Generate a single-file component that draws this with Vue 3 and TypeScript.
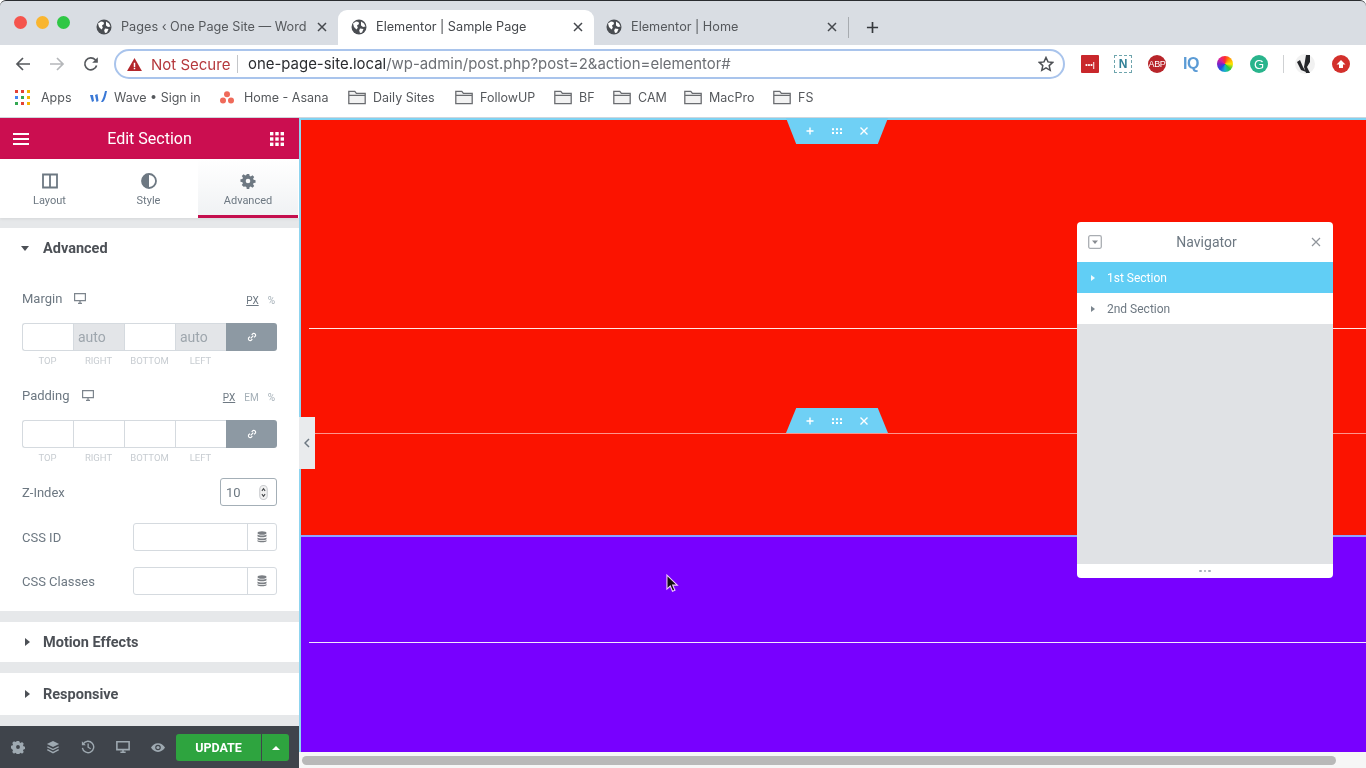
<script setup lang="ts">
const tabs = [
  { title: 'Pages ‹ One Page Site — Word', active: false },
  { title: 'Elementor | Sample Page', active: true },
  { title: 'Elementor | Home', active: false },
]
const bookmarks = [
  { label: 'Daily Sites', w: 107 },
  { label: 'FollowUP', w: 99 },
  { label: 'BF', w: 59 },
  { label: 'CAM', w: 71 },
  { label: 'MacPro', w: 89 },
  { label: 'FS', w: 60 },
]
const sides = ['TOP', 'RIGHT', 'BOTTOM', 'LEFT']
const marginCells = ['', 'auto', '', 'auto']
const paddingCells = ['', '', '', '']
const linkPath = 'M6.5 9.5l3-3M5.6 7.6L4 9.2a2.2 2.2 0 0 0 2.8 2.8l1.6-1.6M7.6 5.6L9.2 4A2.2 2.2 0 0 1 12 6.8l-1.6 1.6'
</script>

<template>
  <div class="screen">
    <header class="tabstrip">
      <div class="lights"><i class="l red"></i><i class="l amber"></i><i class="l green"></i></div>
      <div v-for="t in tabs" :key="t.title" class="tab" :class="{ active: t.active }">
        <svg class="globe" viewBox="0 0 16 16"><circle cx="8" cy="8" r="7.5" fill="#4a4d52"/><path d="M2 4.5l3-2 2.5.5.5 2-2 1.5.8 2.2-1.3 1.8L3 8zM10 2.5l3 2 1.5 3-2.5.5-2-1.5zM9 9.5l3.5 0.5-1.5 3.5-2 .5-.8-2.5z" fill="#fff"/></svg>
        <span class="tab-title">{{ t.title }}</span>
        <svg class="tab-x" viewBox="0 0 10 10"><path d="M1 1l8 8M9 1l-8 8" stroke="#45484d" stroke-width="1.5"/></svg>
      </div>
      <i class="tab-sep"></i>
      <svg class="plus" viewBox="0 0 14 14"><path d="M7 1v12M1 7h12" stroke="#35383c" stroke-width="1.8"/></svg>
    </header>

    <div class="toolbar">
      <svg class="nav" viewBox="0 0 16 16"><path d="M15 8H2M8 2L2 8l6 6" fill="none" stroke="#55585c" stroke-width="1.7"/></svg>
      <svg class="nav" viewBox="0 0 16 16"><path d="M1 8h13M8 2l6 6-6 6" fill="none" stroke="#b5b7ba" stroke-width="1.7"/></svg>
      <svg class="nav" viewBox="0 0 16 16"><path d="M13.6 9.5A6 6 0 1 1 12.3 3.8L14 5.5" fill="none" stroke="#55585c" stroke-width="1.7"/><path d="M14.8 1.2v5.6H9.2z" fill="#55585c"/></svg>
      <div class="omnibox">
        <svg class="warn" viewBox="0 0 16 14"><path d="M8 0l8 14H0z" fill="#b3262b"/><path d="M7.2 5h1.6v4.6H7.200zM7.200 10.600h1.600v1.500H7.200z" fill="#fff"/></svg>
        <span class="insecure">Not Secure</span>
        <i class="omni-sep"></i>
        <span class="url"><b>one-page-site.local</b>/wp-admin/post.php?post=2&amp;action=elementor#</span>
        <svg class="star" viewBox="0 0 16 16"><path d="M8 1.500l2 4.400 4.700.5-3.500 3.200 1 4.700L8 11.900l-4.200 2.400 1-4.700L1.300 6.400 6 5.900z" fill="none" stroke="#4d5054" stroke-width="1.500"/></svg>
      </div>
      <div class="exts">
        <div class="ext e-lp"><span>•••|</span></div>
        <div class="ext e-n">N</div>
        <div class="ext e-abp">ABP</div>
        <div class="ext e-iq">IQ</div>
        <div class="ext e-wheel"></div>
        <div class="ext e-g">G</div>
        <i class="ext-sep"></i>
        <svg class="ext-avatar" viewBox="0 0 20 20"><circle cx="10" cy="10" r="10" fill="#f1f1f1"/><path d="M11 1h4v7l-3 5 3 6h-4l-2-6zM2 8l3-2 3 7 3 5-5-2z" fill="#24262a"/></svg>
        <div class="ext e-up"><svg viewBox="0 0 12 12"><path d="M6 2l4.500 4.500H8V10H4V6.500H1.500z" fill="#fff"/></svg></div>
      </div>
    </div>

    <nav class="bookmarks">
      <div class="bm bm-apps">
        <svg class="apps-ico" viewBox="0 0 15 15">
          <g v-for="(c, r) in [['#e34234','#e34234','#f4b400'],['#4285f4','#34a853','#f4b400'],['#34a853','#e34234','#f4b400']]" :key="r">
            <rect v-for="(f, x) in c" :key="x" :x="x * 6" :y="r * 6" width="3" height="3" :fill="f"/>
          </g>
        </svg>
        <span>Apps</span>
      </div>
      <div class="bm bm-wave">
        <svg class="wave-ico" viewBox="0 0 18 14"><path d="M1 5l2 7 2-1-1-6zM6 5l1.500 7 2-1-1-7zM12 12c2-3 3-7 4-11h2c-1 5-2 9-4 11z" fill="#3a78d6"/></svg>
        <span>Wave • Sign in</span>
      </div>
      <div class="bm bm-asana">
        <svg class="asana-ico" viewBox="0 0 14 13"><circle cx="7" cy="3.200" r="3" fill="#ef6a5a"/><circle cx="3" cy="9.500" r="3" fill="#ef6a5a"/><circle cx="11" cy="9.500" r="3" fill="#ef6a5a"/></svg>
        <span>Home - Asana</span>
      </div>
      <div v-for="b in bookmarks" :key="b.label" class="bm bm-folder" :style="{ width: b.w + 'px' }">
        <svg class="folder" viewBox="0 0 18 15"><path d="M.8 13.600V1.400h6l1.600 2h8.800v10.200zM.8 5.400h16.400" fill="#f2f2f2" stroke="#6a6c70" stroke-width="1.300"/></svg>
        <span>{{ b.label }}</span>
      </div>
    </nav>

    <main class="editor">
      <aside class="panel">
        <div class="panel-head">
          <svg class="head-ico" viewBox="0 0 18 14"><path d="M1 2h16M1 7h16M1 12h16" stroke="#fff" stroke-width="2"/></svg>
          <span>Edit Section</span>
          <svg class="head-ico grid-ico" viewBox="0 0 14 14"><g fill="#fff"><rect x="0" y="0" width="3.400" height="3.400"/><rect x="5.300" y="0" width="3.400" height="3.400"/><rect x="10.600" y="0" width="3.400" height="3.400"/><rect x="0" y="5.300" width="3.400" height="3.400"/><rect x="5.300" y="5.300" width="3.400" height="3.400"/><rect x="10.600" y="5.300" width="3.400" height="3.400"/><rect x="0" y="10.600" width="3.400" height="3.400"/><rect x="5.300" y="10.600" width="3.400" height="3.400"/><rect x="10.600" y="10.600" width="3.400" height="3.400"/></g></svg>
        </div>
        <div class="panel-tabs">
          <div class="ptab">
            <svg viewBox="0 0 16 16"><path d="M1 1.500h14v13H1zM8 1.500v13" fill="none" stroke="#6d7882" stroke-width="1.800"/></svg>
            <span>Layout</span>
          </div>
          <div class="ptab">
            <svg viewBox="0 0 16 16"><circle cx="8" cy="8" r="7" fill="none" stroke="#6d7882" stroke-width="1.800"/><path d="M8 1a7 7 0 0 0 0 14z" fill="#6d7882"/></svg>
            <span>Style</span>
          </div>
          <div class="ptab on">
            <svg viewBox="-1 -1 18 18"><path fill="#6d7882" fill-rule="evenodd" d="M6.600 0h2.800l.4 2.200 1.300.6L13 1.500l2 2-1.300 1.900.6 1.300 2.200.4v2.800l-2.200.4-.6 1.300 1.300 1.900-2 2-1.900-1.300-1.300.6-.4 2.200H6.600l-.4-2.200-1.300-.6L3 14.500l-2-2 1.300-1.900-.6-1.300L-.5 8.900V6.100l2.200-.4.6-1.300L1 2.500l2-2 1.900 1.300 1.300-.6zM8 5.400a2.600 2.600 0 1 0 0 5.200 2.600 2.600 0 0 0 0-5.200z"/></svg>
            <span>Advanced</span>
          </div>
        </div>

        <section class="group first">
          <div class="group-head"><i class="caret-down"></i><strong>Advanced</strong></div>

          <div class="label-row">
            <span class="lbl">Margin</span>
            <svg class="mon" viewBox="0 0 12 11"><path d="M.6.600h10.800v7H.6z" fill="none" stroke="#7d858d" stroke-width="1.200"/><path d="M4 10.400h4M6 8v2" stroke="#7d858d" stroke-width="1.300"/></svg>
            <span class="units"><u>PX</u><em>%</em></span>
          </div>
          <div class="dims">
            <div v-for="(c, i) in marginCells" :key="i" class="cell" :class="{ fill: c }">{{ c }}</div>
            <div class="link"><svg viewBox="0 0 16 16"><path :d="linkPath" fill="none" stroke="#fff" stroke-width="1.300"/></svg></div>
          </div>
          <div class="sides"><span v-for="s in sides" :key="s">{{ s }}</span><i></i></div>

          <div class="label-row second">
            <span class="lbl">Padding</span>
            <svg class="mon" viewBox="0 0 12 11"><path d="M.6.600h10.800v7H.6z" fill="none" stroke="#7d858d" stroke-width="1.200"/><path d="M4 10.400h4M6 8v2" stroke="#7d858d" stroke-width="1.300"/></svg>
            <span class="units"><u>PX</u><em>EM</em><em>%</em></span>
          </div>
          <div class="dims">
            <div v-for="(c, i) in paddingCells" :key="i" class="cell"></div>
            <div class="link"><svg viewBox="0 0 16 16"><path :d="linkPath" fill="none" stroke="#fff" stroke-width="1.300"/></svg></div>
          </div>
          <div class="sides"><span v-for="s in sides" :key="s">{{ s }}</span><i></i></div>

          <div class="field z">
            <span class="lbl">Z-Index</span>
            <div class="num"><span>10</span>
              <svg viewBox="0 0 8 14"><rect x=".5" y=".5" width="7" height="13" rx="3.500" fill="#f2f2f2" stroke="#c9cbce"/><path d="M2.500 5.500L4 3.500l1.500 2M2.500 8.500L4 10.500l1.500-2" fill="none" stroke="#44474b"/></svg>
            </div>
          </div>
          <div class="field idf">
            <span class="lbl">CSS ID</span>
            <div class="dyn"><div class="dyn-in"></div><div class="dyn-btn"><svg viewBox="0 0 10 12"><ellipse cx="5" cy="2" rx="4.500" ry="1.800" fill="#7b7f84"/><path d="M.5 3.400c1 1.300 8 1.300 9 0v1.900c-1 1.300-8 1.300-9 0zM.5 6.400c1 1.300 8 1.300 9 0v1.900c-1 1.300-8 1.300-9 0zM.5 9c1 1.300 8 1.300 9 0v1.200c-1 1.500-8 1.500-9 0z" fill="#7b7f84"/></svg></div></div>
          </div>
          <div class="field cls">
            <span class="lbl">CSS Classes</span>
            <div class="dyn"><div class="dyn-in"></div><div class="dyn-btn"><svg viewBox="0 0 10 12"><ellipse cx="5" cy="2" rx="4.500" ry="1.800" fill="#7b7f84"/><path d="M.5 3.400c1 1.300 8 1.300 9 0v1.900c-1 1.300-8 1.300-9 0zM.5 6.400c1 1.300 8 1.300 9 0v1.900c-1 1.300-8 1.300-9 0zM.5 9c1 1.300 8 1.300 9 0v1.200c-1 1.500-8 1.500-9 0z" fill="#7b7f84"/></svg></div></div>
          </div>
        </section>

        <section class="group closed motion"><i class="caret-right"></i><strong>Motion Effects</strong></section>
        <section class="group closed resp"><i class="caret-right"></i><strong>Responsive</strong></section>

        <footer class="panel-foot">
          <svg class="fi" viewBox="0 0 16 16"><path fill="#a4afb7" fill-rule="evenodd" d="M6.600 1h2.800l.4 1.700 1.300.6L12.600 2.400l2 2-.9 1.500.6 1.300 1.700.4v2.800l-1.700.4-.6 1.300.9 1.500-2 2-1.500-.9-1.300.6-.4 1.700H6.600l-.4-1.700-1.300-.6-1.500.9-2-2 .9-1.500-.6-1.300L0 9.400V6.600l1.700-.4.6-1.300-.9-1.500 2-2 1.500.9 1.300-.6zM8 5.800a2.200 2.200 0 1 0 0 4.400 2.200 2.200 0 0 0 0-4.400z"/></svg>
          <svg class="fi" viewBox="0 0 16 16"><path d="M8 1l7 3.500L8 8 1 4.500z" fill="#a4afb7"/><path d="M1.500 7.700L8 11l6.500-3.300M1.500 11L8 14.500 14.500 11" fill="none" stroke="#a4afb7" stroke-width="1.500"/></svg>
          <svg class="fi" viewBox="0 0 16 16"><path d="M2.500 4.500A6.500 6.500 0 1 1 1.600 9" fill="none" stroke="#a4afb7" stroke-width="1.600"/><path d="M1 1.500v4.500h4.500zM7.400 4h1.500v4l2.500 1.500-.7 1.200-3.300-2z" fill="#a4afb7"/></svg>
          <svg class="fi" viewBox="0 0 16 14"><path d="M1 1h14v9H1z" fill="none" stroke="#a4afb7" stroke-width="1.800"/><path d="M5 13h6M8 10v3" stroke="#a4afb7" stroke-width="1.800"/></svg>
          <svg class="fi eye" viewBox="0 0 16 10"><path fill="#a4afb7" fill-rule="evenodd" d="M8 0c3.500 0 6.500 2.200 8 5-1.500 2.800-4.500 5-8 5S1.500 7.800 0 5c1.500-2.800 4.500-5 8-5zm0 1.800a3.200 3.200 0 1 0 0 6.400 3.200 3.200 0 0 0 0-6.400z"/><circle cx="8" cy="5" r="1.800" fill="#a4afb7"/></svg>
          <div class="publish">
            <span class="update">UPDATE</span>
            <span class="pub-more"><i></i></span>
          </div>
        </footer>
      </aside>

      <div class="canvas">
        <div class="page">
          <div class="sec red">
            <div class="col col-a"></div>
            <div class="col col-b"></div>
            <div class="handle top"><svg viewBox="0 0 66 12"><path d="M6 2.500v7M2.500 6h7M56.500 2.500l7 7M63.500 2.500l-7 7" stroke="#fff" stroke-width="1.400"/><g fill="#fff"><rect x="28" y="3.200" width="2" height="2"/><rect x="32" y="3.200" width="2" height="2"/><rect x="36" y="3.200" width="2" height="2"/><rect x="28" y="7" width="2" height="2"/><rect x="32" y="7" width="2" height="2"/><rect x="36" y="7" width="2" height="2"/></g></svg></div>
            <div class="handle mid"><svg viewBox="0 0 66 12"><path d="M6 2.500v7M2.500 6h7M56.500 2.500l7 7M63.500 2.500l-7 7" stroke="#fff" stroke-width="1.400"/><g fill="#fff"><rect x="28" y="3.200" width="2" height="2"/><rect x="32" y="3.200" width="2" height="2"/><rect x="36" y="3.200" width="2" height="2"/><rect x="28" y="7" width="2" height="2"/><rect x="32" y="7" width="2" height="2"/><rect x="36" y="7" width="2" height="2"/></g></svg></div>
          </div>
          <div class="sec purple">
            <div class="col col-c"></div>
          </div>
          <svg class="cursor" viewBox="0 0 14 20"><path d="M1 1v15l3.600-3.300 2.400 5.600 2.600-1.100-2.400-5.400h5z" fill="#111" stroke="#f2c7ff" stroke-width="1.200"/></svg>
        </div>
        <div class="hscroll"><div class="thumb"></div></div>

        <div class="collapse"><svg viewBox="0 0 6 10"><path d="M5 1L1 5l4 4" fill="none" stroke="#6d7882" stroke-width="1.500"/></svg></div>

        <div class="navigator">
          <div class="nav-head">
            <svg class="nav-min" viewBox="0 0 14 14"><rect x=".7" y=".7" width="12.600" height="12.600" rx="1.500" fill="none" stroke="#a9adb2" stroke-width="1.300"/><path d="M4 5.500h6L7 9z" fill="#888c91"/></svg>
            <span>Navigator</span>
            <svg class="nav-x" viewBox="0 0 10 10"><path d="M1 1l8 8M9 1l-8 8" stroke="#90959b" stroke-width="1.200"/></svg>
          </div>
          <div class="nav-row sel"><i class="n-caret"></i>1st Section</div>
          <div class="nav-row"><i class="n-caret"></i>2nd Section</div>
          <div class="nav-body"></div>
          <div class="nav-foot"><i></i><i></i><i></i></div>
        </div>
      </div>
    </main>
  </div>
</template>

<style>
html, body { margin: 0; background: #1d1f22; overflow: hidden; }
</style>

<style scoped>
.screen {
  width: 1366px; height: 768px; display: flex; flex-direction: column; overflow: hidden;
  background: #fff; font-family: Roboto, "Liberation Sans", sans-serif; color: #55595c;
  filter: blur(0.45px);
}
.tabstrip {
  height: 45px; box-sizing: border-box; flex: none; display: flex; align-items: flex-end;
  background: #d9dde3; border-top: 1px solid #2a2c30; border-radius: 6px 6px 0 0;
  position: relative;
}
.lights { width: 83px; height: 44px; box-sizing: border-box; padding: 15px 0 0 14px; display: flex; gap: 8.500px; }
.l { width: 13px; height: 13px; border-radius: 50%; display: block; }
.red { background: #f5544d; }
.amber { background: #f9b52f; }
.green { background: #2fc745; }
.tab {
  width: 255px; height: 35px; box-sizing: border-box; display: flex; align-items: center;
  padding: 0 11px 2px 11px; color: #55585c; position: relative; flex: none;
  font-family: Inter, Roboto, sans-serif; font-size: 12.700px;
}
.tab.active { background: #fff; border-radius: 9px 9px 0 0; color: #45484c; width: 256px; margin-right: -1px; }
.tab:first-of-type { margin-right: -2px; }
.tab:first-of-type .tab-title { -webkit-mask-image: linear-gradient(90deg, #000 92%, transparent 100%); mask-image: linear-gradient(90deg, #000 92%, transparent 100%); }
.globe { width: 16px; height: 16px; flex: none; margin-left: 2px; margin-right: 9px; }
.tab-title { flex: 1; min-width: 0; white-space: nowrap; overflow: hidden; }
.tab-x { width: 10px; height: 10px; flex: none; margin-left: 10px; }
.tab-sep { width: 1px; height: 21px; background: #a7abb0; margin: 0 0 7px 0; flex: none; }
.plus { width: 13px; height: 13px; margin: 0 0 11px 17px; flex: none; }

.toolbar { height: 35px; flex: none; display: flex; align-items: center; padding: 3px 0 0 15px; box-sizing: border-box; }
.nav { width: 16px; height: 16px; margin-right: 18px; flex: none; }
.omnibox {
  width: 951px; height: 30px; margin-left: -3px; flex: none; box-sizing: border-box;
  border: 2px solid #a9c4ec; border-radius: 15px; display: flex; align-items: center; padding: 0 8px 0 11px;
  font-family: Inter, Roboto, sans-serif;
}
.warn { width: 15px; height: 13px; flex: none; }
.insecure { font-size: 15px; color: #b5383c; margin-left: 9px; width: 80px; white-space: nowrap; }
.omni-sep { width: 1px; height: 18px; background: #c4c6c9; margin: 0 10px 0 6px; }
.url { font-size: 14.930px; color: #6d7075; flex: 1; white-space: nowrap; }
.url b { font-weight: 400; color: #2b2d30; }
.star { width: 16px; height: 16px; margin-right: 1px; }
.exts { display: flex; align-items: center; margin-left: 16px; }
.ext { width: 18px; height: 18px; flex: none; margin-right: 16px; box-sizing: border-box; display: flex; align-items: center; justify-content: center; color: #fff; font-family: "Liberation Sans", sans-serif; font-weight: 700; }
.e-lp { background: #c9272b; border-radius: 1px; font-size: 7px; margin-right: 15px; }
.e-n { border: 1.500px dashed #6fa5ad; color: #2f7f96; font-size: 12px; }
.e-abp { background: #b8252a; border-radius: 50%; font-size: 9px; font-weight: 400; letter-spacing: -0.3px; }
.e-iq { color: #5b9bd5; font-size: 16px; letter-spacing: -0.500px; }
.e-wheel { background: conic-gradient(#ff2d2d, #ff9b00, #ffe600, #2ac940, #18b6c9, #2050e0, #7b22c9, #e02090, #ff2d2d); border-radius: 50%; width: 16px; height: 16px; margin-right: 17px; margin-left: 1px; }
.e-g { background: #29b48c; border-radius: 50%; font-size: 13px; font-weight: 400; margin-right: 15px; }
.ext-sep { width: 1px; height: 18px; background: #cfd1d3; margin-right: 11px; }
.ext-avatar { width: 20px; height: 20px; margin-right: 17px; }
.e-up { background: #d3302c; border-radius: 50%; }
.e-up svg { width: 12px; height: 12px; }

.bookmarks { height: 37px; flex: none; display: flex; align-items: center; padding: 0 0 3px 15px; box-sizing: border-box; font-size: 12.500px; font-family: Inter, Roboto, sans-serif; color: #55585c; }
.bm { display: flex; align-items: center; white-space: nowrap; flex: none; }
.bm-apps { width: 73px; gap: 11px; }
.apps-ico { width: 15px; height: 15px; }
.bm-wave { width: 130px; gap: 7px; }
.wave-ico { width: 18px; height: 14px; margin-left: 1px; }
.bm-asana { width: 128px; gap: 10px; margin-left: 2px; }
.asana-ico { width: 14px; height: 13px; }
.bm-folder { gap: 7px; }
.folder { width: 18px; height: 15px; flex: none; }

.editor { flex: 1; min-height: 0; display: flex; border-top: 1px solid #cfd6dc; }
.panel { width: 299px; flex: none; display: flex; flex-direction: column; background: #e6e8ea; box-sizing: border-box; height: 650px; }
.panel-head { height: 41px; flex: none; background: #cb0e50; color: #fff; display: flex; align-items: center; justify-content: space-between; padding: 0 15px 0 12px; font-size: 16px; font-weight: 400; }
.panel-head span { margin-right: 1px; }
.head-ico { width: 18px; height: 14px; }
.grid-ico { width: 14px; height: 14px; }
.panel-tabs { height: 59px; flex: none; display: flex; background: #fff; box-shadow: 0 1px 3px rgba(0,0,0,.08); }
.ptab { width: 99px; flex: none; display: flex; flex-direction: column; align-items: center; box-sizing: border-box; padding-top: 14px; font-size: 11px; color: #6d7882; gap: 5px; }
.ptab svg { width: 16px; height: 16px; }
.ptab.on { background: linear-gradient(#fff, #f0f2f4); border-bottom: 3px solid #c40f4e; width: 100px; }
.group { background: #fff; }
.group strong { font-size: 14.500px; font-weight: 700; color: #4c5056; }
.first { margin-top: 10px; height: 383px; flex: none; display: flex; flex-direction: column; padding: 0 22px 0 22px; box-sizing: border-box; }
.group-head { height: 40px; flex: none; display: flex; align-items: center; }
.caret-down { width: 0; height: 0; border: 4.500px solid transparent; border-top: 5px solid #4c5056; border-bottom: 0; margin-right: 14px; margin-left: -1px; }
.caret-right { width: 0; height: 0; border: 4px solid transparent; border-left: 5px solid #4c5056; border-right: 0; margin-right: 10px; }
.label-row { display: flex; align-items: center; height: 20px; margin-top: 20px; flex: none; }
.label-row.second { margin-top: 18px; }
.lbl { font-size: 13px; color: #6d7882; }
.mon { width: 12px; height: 11px; margin-left: 12px; }
.units { margin-left: auto; font-size: 10px; color: #a4afb7; display: flex; gap: 9px; padding: 4px 2px 0 0; }
.units u { color: #6d7882; }
.units em { font-style: normal; }
.dims { display: flex; height: 28px; margin-top: 15px; flex: none; }
.cell { width: 51px; box-sizing: border-box; border: 1px solid #d5dadf; border-right: 0; background: #fff; color: #a4afb7; font-size: 14px; line-height: 26px; padding-left: 4px; flex: none; }
.cell:first-child { border-radius: 3px 0 0 3px; }
.cell.fill { background: #e3e5e8; color: #9ea6ad; }
.link { flex: 1; background: #8d99a3; border-radius: 0 3px 3px 0; display: flex; align-items: center; justify-content: center; }
.link svg { width: 14px; height: 14px; }
.sides { display: flex; height: 12px; margin-top: 4px; flex: none; font-size: 9.500px; color: #c7ccd1; line-height: 12px; }
.sides span { width: 51px; text-align: center; flex: none; }
.field { display: flex; align-items: center; justify-content: space-between; flex: none; height: 28px; }
.z { margin-top: 14px; }
.idf { margin-top: 17px; }
.cls { margin-top: 16px; }
.num { width: 57px; height: 28px; box-sizing: border-box; border: 1px solid #a4afb7; border-radius: 3px; display: flex; align-items: center; justify-content: space-between; padding: 0 8px 0 5px; font-size: 13px; color: #6d7882; }
.num svg { width: 9px; height: 15px; }
.dyn { width: 144px; height: 28px; display: flex; box-sizing: border-box; border: 1px solid #d5dadf; border-radius: 3px; }
.dyn-in { flex: 1; }
.dyn-btn { width: 28px; border-left: 1px solid #d5dadf; display: flex; align-items: center; justify-content: center; }
.dyn-btn svg { width: 10px; height: 12px; }
.closed { display: flex; align-items: center; padding-left: 25px; flex: none; box-sizing: border-box; }
.motion { margin-top: 11px; height: 40px; }
.resp { margin-top: 11px; height: 42px; }
.closed strong { margin-left: 3px; }
.panel-foot { margin-top: 11px; height: 42px; flex: none; background: #3f444b; display: flex; align-items: center; padding: 0 10px 0 11px; box-sizing: border-box; position: relative; }
.fi { width: 14px; height: 14px; margin-right: 21px; flex: none; opacity: .95; }
.eye { height: 9px; margin-right: 11px; }
.publish { display: flex; height: 27px; margin-left: auto; margin-top: 1px; color: #fff; font-size: 12.500px; font-weight: 700; }
.update { width: 85px; background: #2ea43f; border-radius: 3px 0 0 3px; display: flex; align-items: center; justify-content: center; }
.pub-more { width: 27px; margin-left: 1px; background: #2ea43f; border-radius: 0 3px 3px 0; display: flex; align-items: center; justify-content: center; }
.pub-more i { width: 0; height: 0; border: 4px solid transparent; border-bottom: 4px solid #fff; border-top: 0; }

.canvas { flex: 1; min-width: 0; position: relative; display: flex; flex-direction: column; }
.page { flex: 1; display: flex; flex-direction: column; position: relative; border-left: 2px solid #8fd4ef; }
.sec { position: relative; padding-left: 8px; box-sizing: border-box; flex: none; }
.sec.red { background: #fb1300; height: 418px; border-top: 2px solid #7fd3f3; border-bottom: 1px solid #8fa3ff; }
.sec.purple { background: #7800ff; height: 216px; border-top: 1px solid #8fa3ff; }
.col { border-bottom: 1px solid rgba(255,255,255,.9); }
.col-a { height: 208px; }
.col-b { height: 105px; border-bottom-color: rgba(255,255,255,.55); margin-top: -1px; }
.col-c { height: 105px; }
.handle { position: absolute; left: 485px; width: 102px; display: flex; align-items: center; justify-content: center; background: #6fd0f5; }
.handle svg { width: 66px; height: 12px; }
.handle.top { top: -2px; height: 26px; clip-path: polygon(0 0, 100% 0, 90% 100%, 10% 100%); }
.handle.mid { top: 288px; height: 25px; clip-path: polygon(10% 0, 90% 0, 100% 100%, 0 100%); }
.cursor { position: absolute; left: 365px; top: 456px; width: 13px; height: 19px; }
.hscroll { height: 16px; flex: none; background: #f6f6f6; padding: 4px 0 0 3px; box-sizing: border-box; }
.thumb { width: 1034px; height: 9px; border-radius: 5px; background: #b8b8b8; }
.collapse { position: absolute; left: 0; top: 299px; width: 16px; height: 52px; background: #e9ebed; display: flex; align-items: center; justify-content: center; }
.collapse svg { width: 6px; height: 10px; }

.navigator { position: absolute; left: 778px; top: 104px; width: 256px; height: 356px; border-radius: 4px; overflow: hidden; display: flex; flex-direction: column; background: #fff; }
.nav-head { height: 40px; flex: none; display: flex; align-items: center; justify-content: space-between; padding: 0 12px 0 11px; font-size: 14px; color: #6d7882; }
.nav-min { width: 14px; height: 14px; }
.nav-x { width: 10px; height: 10px; }
.nav-row { height: 31px; flex: none; display: flex; align-items: center; padding-left: 14px; font-size: 12px; color: #6d7882; }
.nav-row.sel { background: #61cef5; color: #fff; }
.n-caret { width: 0; height: 0; border: 3.500px solid transparent; border-left: 4px solid currentColor; border-right: 0; margin-right: 12px; opacity: .9; }
.nav-body { flex: 1; background: #e0e2e5; }
.nav-foot { height: 14px; flex: none; display: flex; align-items: center; justify-content: center; gap: 2px; }
.nav-foot i { width: 2.500px; height: 2.500px; background: #a4afb7; border-radius: 50%; }
</style>
